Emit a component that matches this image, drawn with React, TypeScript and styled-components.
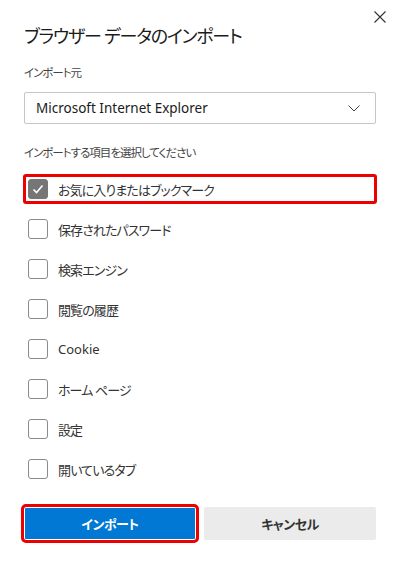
import { createGlobalStyle, styled } from 'styled-components';

const GlobalStyle = createGlobalStyle`
  html, body {
    margin: 0;
    padding: 0;
    background: #ffffff;
  }
  body {
    font-family: "Noto Sans", "Noto Sans CJK JP", sans-serif;
    font-feature-settings: "palt";
    color: #1b1b1b;
  }
`;

const items = [
  { label: 'お気に入りまたはブックマーク', checked: true, highlight: true },
  { label: '保存されたパスワード' },
  { label: '検索エンジン' },
  { label: '閲覧の履歴' },
  { label: 'Cookie', latin: true },
  { label: 'ホーム ページ' },
  { label: '設定' },
  { label: '開いているタブ' },
];

const App = () => {
  return (
    <>
      <GlobalStyle />
      <Dialog>
        <CloseButton aria-label='close'>
          <svg width='12' height='12' viewBox='0 0 12 12'>
            <path d='M0.5 0.5 L11.5 11.5 M11.5 0.5 L0.5 11.5' stroke='#333' strokeWidth='1.1' fill='none' />
          </svg>
        </CloseButton>
        <Title>ブラウザー データのインポート</Title>

        <Label>インポート元</Label>
        <Select>
          <span>Microsoft Internet Explorer</span>
          <svg width='12' height='7' viewBox='0 0 12 7'>
            <path d='M0.5 0.5 L6 6 L11.5 0.5' stroke='#444' strokeWidth='1' fill='none' />
          </svg>
        </Select>

        <Label $gap={21}>インポートする項目を選択してください</Label>
        <List>
          {items.map((item) => (
            <Row key={item.label} $highlight={!!item.highlight}>
              <Box $checked={!!item.checked}>
                {item.checked && (
                  <svg width='14' height='14' viewBox='0 0 14 14'>
                    <path d='M2.5 7.5 L5.5 10.5 L11.5 3.5' stroke='#fff' strokeWidth='1.6' fill='none' />
                  </svg>
                )}
              </Box>
              <ItemText $latin={!!item.latin}>{item.label}</ItemText>
            </Row>
          ))}
        </List>

        <Footer>
          <Button $primary>インポート</Button>
          <Button>キャンセル</Button>
        </Footer>
      </Dialog>
    </>
  );
};

export default App;

const Dialog = styled.div`
  position: relative;
  width: 400px;
  height: 564px;
  box-sizing: border-box;
  padding: 24px 24px 0 24px;
  display: flex;
  flex-direction: column;
  background: #fff;
`;

const CloseButton = styled.div`
  position: absolute;
  top: 11px;
  right: 14px;
  width: 12px;
  height: 12px;
  display: flex;
`;

const Title = styled.h1`
  margin: 0;
  font-size: 18px;
  line-height: 24px;
  font-weight: 400;
  letter-spacing: -1.2px;
  color: #1b1b1b;
`;

const Label = styled.div<{ $gap?: number }>`
  margin-top: ${({ $gap = 17 }) => $gap}px;
  font-size: 11.5px;
  line-height: 16px;
  letter-spacing: -1px;
  color: #444;
`;

const Select = styled.div`
  margin-top: 11px;
  height: 32px;
  box-sizing: border-box;
  border: 1px solid #c6c6c6;
  border-radius: 2px;
  display: flex;
  align-items: center;
  justify-content: space-between;
  padding: 0 15px 0 11px;
  font-size: 13.5px;
  color: #1b1b1b;
`;

const List = styled.div`
  margin-top: 14px;
  display: flex;
  flex-direction: column;
  gap: 12px;
`;

const Row = styled.div<{ $highlight: boolean }>`
  height: 28px;
  display: flex;
  align-items: center;
  gap: 10px;
  padding-left: 4px;
  border-radius: 2px;
  outline: ${({ $highlight }) => ($highlight ? '3px solid #ec0000' : 'none')};
  outline-offset: -2px;
`;

const Box = styled.div<{ $checked: boolean }>`
  width: 20px;
  height: 20px;
  box-sizing: border-box;
  border-radius: 3px;
  border: 1px solid ${({ $checked }) => ($checked ? '#767676' : '#8a8a8a')};
  background: ${({ $checked }) => ($checked ? '#767676' : '#fff')};
  display: flex;
  align-items: center;
  justify-content: center;
`;

const ItemText = styled.span<{ $latin: boolean }>`
  font-size: 13px;
  letter-spacing: ${({ $latin }) => ($latin ? '0' : '-0.9px')};
  color: #333;
`;

const Footer = styled.div`
  margin-top: 24px;
  display: flex;
  gap: 8px;
`;

const Button = styled.div<{ $primary?: boolean }>`
  flex: 1;
  height: 33px;
  display: flex;
  align-items: center;
  justify-content: center;
  border-radius: 2px;
  font-size: 13px;
  font-weight: 700;
  letter-spacing: -0.5px;
  background: ${({ $primary }) => ($primary ? '#0078d4' : '#ebebeb')};
  color: ${({ $primary }) => ($primary ? '#fff' : '#333')};
  box-shadow: ${({ $primary }) => ($primary ? 'inset 0 0 0 1px #fff' : 'none')};
  outline: ${({ $primary }) => ($primary ? '3px solid #ec0000' : 'none')};
  outline-offset: 0;
`;
